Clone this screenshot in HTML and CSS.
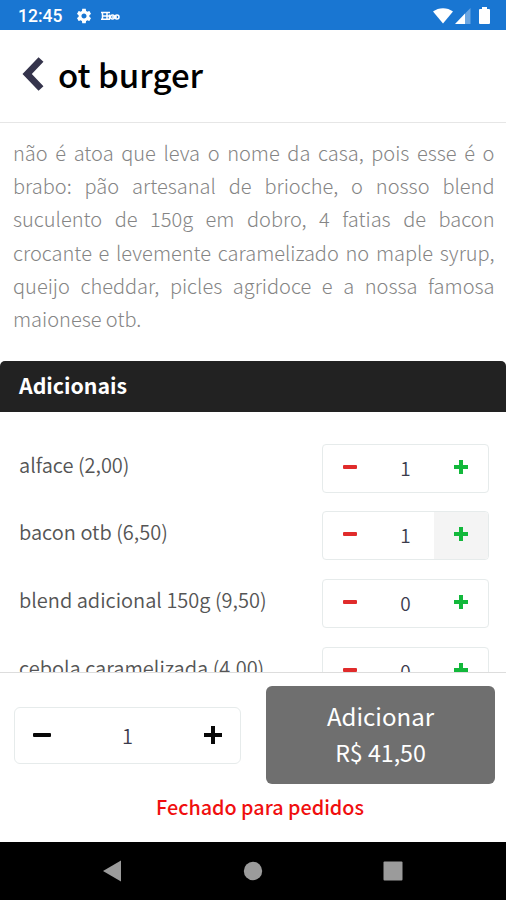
FILE: index.html
```html
<!DOCTYPE html>
<html lang="pt-BR">
<head>
  <meta charset="UTF-8" />
  <meta name="viewport" content="width=device-width, initial-scale=1.0" />
  <title>ot burger</title>
  <link rel="stylesheet" href="styles.css">
</head>
<body>
  <div class="status-bar">
    <span class="clock">12:45</span>
    <svg class="gear" width="18" height="18" viewBox="0 0 24 24"><path fill="#fff" d="M19.14 12.94c.04-.3.06-.61.06-.94s-.02-.64-.07-.94l2.03-1.58c.18-.14.23-.41.12-.61l-1.92-3.32c-.12-.22-.37-.29-.59-.22l-2.39.96c-.5-.38-1.03-.7-1.62-.94l-.36-2.54c-.04-.24-.24-.41-.48-.41h-3.84c-.24 0-.43.17-.47.41l-.36 2.54c-.59.24-1.13.57-1.62.94l-2.39-.96c-.22-.08-.47 0-.59.22L2.74 8.87c-.12.21-.08.47.12.61l2.03 1.58c-.05.3-.09.63-.09.94s.02.64.07.94l-2.03 1.58c-.18.14-.23.41-.12.61l1.92 3.32c.12.22.37.29.59.22l2.39-.96c.5.38 1.03.7 1.62.94l.36 2.54c.05.24.24.41.48.41h3.84c.24 0 .44-.17.47-.41l.36-2.54c.59-.24 1.13-.56 1.62-.94l2.39.96c.22.08.47 0 .59-.22l1.92-3.32c.12-.22.07-.47-.12-.61l-2.01-1.58zM12 15.4c-1.9 0-3.4-1.5-3.4-3.4s1.5-3.4 3.4-3.4 3.4 1.5 3.4 3.4-1.5 3.4-3.4 3.4z"/></svg>
    <svg class="badge" width="19" height="10" viewBox="0 0 19 10"><g fill="none" stroke="#fff" stroke-width="1.5"><path d="M0 1.5h9M1.5 1v7.500M1 5h7M0 8.200h9M6 1.500v7M8.500 3.500v5"/><circle cx="11.500" cy="6" r="2"/><circle cx="16" cy="6" r="2"/><path d="M11 6h5"/></g></svg>
    <div class="signals">
      <svg width="20" height="16" viewBox="0 0 20 16"><path fill="#fff" d="M0 3.600C5.500-.9 14.500-.9 20 3.600L10 15.500z"/></svg>
      <svg width="16" height="16" viewBox="0 0 16 16"><path fill="#6ba6e2" d="M15.500 0v16H10V5.500z"/><path fill="#fff" d="M10 5.500V16H0z"/></svg>
      <svg width="11" height="17" viewBox="0 0 11 17"><path fill="#fff" d="M3 0h5v2h2q1 0 1 1v13q0 1-1 1H1q-1 0-1-1V3q0-1 1-1h2z"/></svg>
    </div>
  </div>

  <header class="header">
    <svg class="back" width="22" height="34" viewBox="0 0 22 34"><path fill="none" stroke="#35344c" stroke-width="6.800" d="M19 2.500L5.200 17 19 31.500"/></svg>
    <h1>ot burger</h1>
  </header>

  <main class="content">
    <p class="description">não é atoa que leva o nome da casa, pois esse é o brabo: pão artesanal de brioche, o nosso blend suculento de 150g em dobro, 4 fatias de bacon crocante e levemente caramelizado no maple syrup, queijo cheddar, picles agridoce e a nossa famosa maionese otb.</p>
    <h2 class="section">Adicionais</h2>
    <ul class="extras">
      <li>
        <span>alface (2,00)</span>
        <div class="stepper"><button class="minus"></button><b>1</b><button class="plus"></button></div>
      </li>
      <li>
        <span>bacon otb (6,50)</span>
        <div class="stepper"><button class="minus"></button><b>1</b><button class="plus active"></button></div>
      </li>
      <li>
        <span>blend adicional 150g (9,50)</span>
        <div class="stepper"><button class="minus"></button><b>0</b><button class="plus"></button></div>
      </li>
      <li>
        <span>cebola caramelizada (4,00)</span>
        <div class="stepper"><button class="minus"></button><b>0</b><button class="plus"></button></div>
      </li>
    </ul>
  </main>

  <footer class="footer">
    <div class="order">
      <div class="stepper quantity"><button class="minus"></button><b>1</b><button class="plus"></button></div>
      <button class="add"><span>Adicionar</span><span class="price">R$ 41,50</span></button>
    </div>
    <p class="closed">Fechado para pedidos</p>
  </footer>

  <nav class="nav-bar">
    <svg width="20" height="22" viewBox="0 0 20 22"><path fill="#9b9b9b" d="M19 .5v21L1 11z"/></svg>
    <svg width="20" height="20" viewBox="0 0 20 20"><circle cx="10" cy="10" r="9.200" fill="#9b9b9b"/></svg>
    <svg width="20" height="20" viewBox="0 0 20 20"><rect x=".5" y=".5" width="19" height="19" rx="1" fill="#9b9b9b"/></svg>
  </nav>
</body>
</html>
```
FILE: styles.css
```css
* { box-sizing: border-box; }
body { margin: 0; width: 506px; height: 900px; display: flex; flex-direction: column; overflow: hidden; background: #fff; font-family: "Noto Sans CJK JP", "Open Sans", sans-serif; }
h1, h2, p, ul { margin: 0; padding: 0; }
button { border: none; padding: 0; background: none; font-family: inherit; cursor: pointer; }
svg { display: block; flex: none; }

.status-bar { flex: none; height: 30px; padding: 1px 16px 0 18px; display: flex; align-items: center; background: #1976d2; color: #fff; }
.clock { width: 57px; font: 500 17.500px/30px Roboto, sans-serif; }
.badge { margin-left: 8px; }
.signals { margin-left: auto; display: flex; align-items: center; }
.signals svg:nth-child(2) { margin-left: 2px; }
.signals svg:nth-child(3) { margin-left: 8px; }

.header { flex: none; height: 93px; padding: 0 22px; display: flex; align-items: center; border-bottom: 1px solid #e6e6e6; }
.back { margin-top: -5px; }
h1 { margin: -5px 0 0 14px; font-size: 33px; font-weight: 500; line-height: 40px; color: #000; }

.content { flex: 1; min-height: 0; overflow: hidden; }
.description { padding: 13px 11.500px 25.800px 13px; font-size: 20px; font-weight: 300; line-height: 33.200px; color: #858585; text-align: justify; }
.section { height: 51px; padding-left: 19px; border-radius: 5px 5px 0 0; background: #222; color: #fff; font-size: 21.300px; font-weight: 700; line-height: 48px; }
.extras { padding: 31.500px 17px 0 19px; list-style: none; }
.extras li { display: flex; justify-content: space-between; height: 67.700px; font-size: 20px; font-weight: 350; line-height: 42px; color: #555; }

.stepper { display: flex; width: 167px; height: 49px; border: 1px solid #e6ebeb; border-radius: 4px; overflow: hidden; }
.stepper b { flex: 1; text-align: center; font-size: 19px; font-weight: 350; line-height: 45px; color: #3b3b4c; }
.stepper button { width: 54px; display: flex; align-items: center; justify-content: center; padding-bottom: 3px; }
.stepper .active { background: #f4f4f4; }
.minus::before { content: ""; width: 14px; height: 4px; border-radius: 1px; background: #e02b2b; }
.plus::before { content: ""; width: 14px; height: 14px; background: linear-gradient(#12b83b, #12b83b) center / 100% 4px no-repeat, linear-gradient(#12b83b, #12b83b) center / 4px 100% no-repeat; }

.footer { flex: none; height: 170px; padding: 13px 11px 0 14px; border-top: 1px solid #ddd; }
.order { display: flex; align-items: center; justify-content: space-between; }
.stepper.quantity { width: 227px; height: 57px; border-radius: 6px; }
.quantity button { padding-bottom: 0; }
.quantity b { font-size: 20px; line-height: 55px; }
.quantity .minus::before { width: 18px; background: #080808; }
.quantity .plus::before { width: 18px; height: 18px; background: linear-gradient(#080808, #080808) center / 100% 4px no-repeat, linear-gradient(#080808, #080808) center / 4px 100% no-repeat; }
.add { display: flex; flex-direction: column; align-items: center; justify-content: center; width: 229px; height: 98px; padding-bottom: 3px; border-radius: 6px; background: #6f6f6f; color: #fff; font-size: 24px; line-height: 36px; }
.price { font-size: 23.200px; }
.closed { text-align: center; padding-left: 11px; font-size: 19.800px; font-weight: 500; line-height: 46px; color: #f00f0f; }

.nav-bar { flex: none; height: 58px; display: flex; align-items: center; justify-content: space-between; padding: 0 103px 0 102px; background: #000; }
```
